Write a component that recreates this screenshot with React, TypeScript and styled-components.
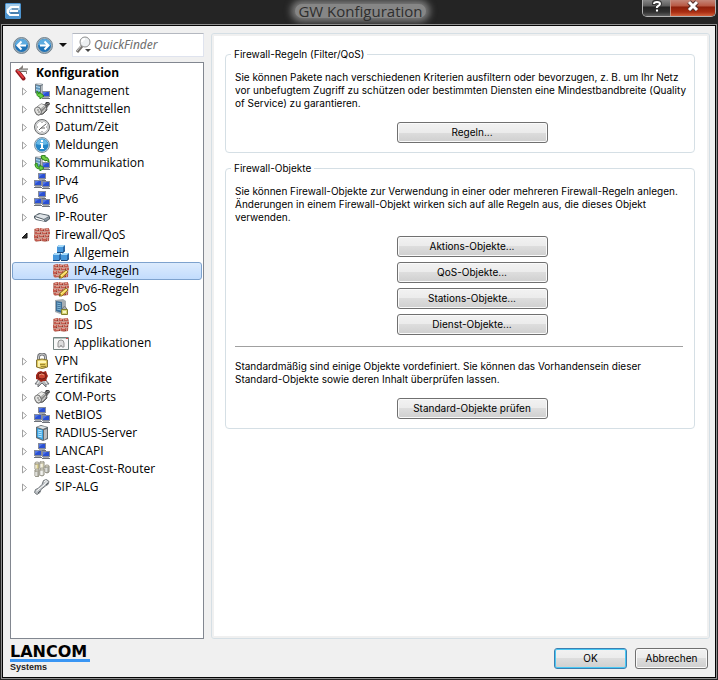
import React from "react";
import styled, { createGlobalStyle, css } from "styled-components";

const GlobalStyle = createGlobalStyle`
  * { box-sizing: border-box; }
  body { margin: 0; background: #242424; font: 10px/13px Inter, "Liberation Sans", Arial, sans-serif; color: #000; }
  button, input { font: inherit; color: inherit; }
`;

const Window = styled.div`
  min-height: 100vh;
  display: flex;
  flex-direction: column;
  background: #242424;
  padding: 0 1px 1px;
`;

const TitleBar = styled.header`
  height: 24px;
  display: grid;
  grid-template-columns: 1fr auto 1fr;
  align-items: start;
  padding: 0 1px 0 4px;
`;

const AppIcon = styled.div`
  padding-top: 3px;
  svg { display: block; }
`;

const Title = styled.h1`
  margin: 4px 0 0;
  padding: 0 3px;
  font: 15px/14px "Open Sans", "Noto Sans", sans-serif;
  color: #2e2e2e;
  background: #868686;
  border-radius: 7px;
  box-shadow: 0 0 7px 4px #7c7c7c;
`;

const CaptionButtons = styled.div`
  justify-self: end;
  display: flex;
  height: 17px;
  border: 1px solid #b4b4b4;
  border-top: 0;
  border-radius: 0 0 5px 5px;
  overflow: hidden;
`;

const CaptionButton = styled.button<{ $close?: boolean }>`
  border: 0;
  padding: 0;
  width: ${p => (p.$close ? 45 : 27)}px;
  display: flex;
  justify-content: center;
  align-items: flex-start;
  background: ${p => p.$close
    ? "linear-gradient(#c48678 0, #b85843 6px, #8d1f0a 7px, #a92d12 12px, #d4623c 16px)"
    : "linear-gradient(#868686 0, #5c5c5c 6px, #242424 7px, #303030 12px, #606060 16px)"};
  box-shadow: ${p => (p.$close ? "inset 1px 0 #c79080" : "none")};
`;

const Client = styled.main`
  flex: 1;
  display: grid;
  grid-template-columns: 194px minmax(0, 1fr);
  grid-template-rows: minmax(0, 1fr) auto;
  column-gap: 7px;
  padding: 7px 5px 3px 7px;
  background: #f0f0f0;
  border: 1px solid #050505;
  outline: 1px solid #8f8f8f;
  margin: 1px;
`;

const SidePanel = styled.aside`
  display: flex;
  flex-direction: column;
  gap: 5px;
`;

const Finder = styled.div`
  display: flex;
  align-items: center;
  height: 24px;
`;

const NavButton = styled.button<{ $narrow?: boolean }>`
  width: ${p => (p.$narrow ? 14 : 23)}px;
  height: 24px;
  padding: 0;
  border: 0;
  background: none;
  display: grid;
  place-items: center;
`;

const SearchField = styled.label`
  flex: 1;
  min-width: 0;
  height: 24px;
  margin-left: 2px;
  display: flex;
  align-items: center;
  background: #fff;
  border: 1px solid #dfe3ee;
  border-top-color: #b4b8c0;
  padding-left: 3px;
  svg { flex: none; }
  input {
    flex: 1;
    min-width: 0;
    border: 0;
    outline: 0;
    padding: 0 0 0 1px;
    background: none;
    font: italic 12px/18px "Noto Sans", "Open Sans", sans-serif;
  }
  input::placeholder { color: #6d6d6d; opacity: 1; }
`;

const Tree = styled.ul`
  flex: 1;
  margin: 0;
  padding: 1px;
  list-style: none;
  background: #fff;
  border: 1px solid #828790;
  font: 12px/18px "Open Sans", "Noto Sans", sans-serif;
`;

const SubTree = styled.ul`
  margin: 0;
  padding: 0;
  list-style: none;
`;

const TreeRow = styled.div<{ $level: number; $selected?: boolean }>`
  height: 18px;
  display: flex;
  align-items: center;
  gap: 5px;
  padding-left: ${p => [2, 7, 40][p.$level]}px;
  border: 1px solid transparent;
  border-radius: 3px;
  white-space: nowrap;
  font-weight: ${p => (p.$level === 0 ? 700 : 400)};
  ${p => p.$selected && css`
    border-color: #7da2ce;
    background: linear-gradient(#dcebfd, #c2dcfd);
  `}
  svg { flex: none; display: block; }
`;

const Expander = styled.button`
  width: 9px;
  height: 16px;
  padding: 0;
  border: 0;
  background: none;
  display: grid;
  place-items: center;
`;

const Page = styled.section`
  background: #fff;
  border: 1px solid #d5dfe5;
  border-radius: 3px;
  box-shadow: inset 0 0 0 2px #f0f0f0;
  padding: 14px 14px 0 13px;
`;

const Group = styled.fieldset`
  min-width: 0;
  margin: 0 0 9px;
  padding: 10px 3px 9px 9px;
  border: 1px solid #d5dfe5;
  border-radius: 4px;
  legend { margin-left: -4px; padding: 0 3px; }
`;

const Text = styled.p`
  margin: 0;
  white-space: pre-line;
`;

const ButtonStack = styled.div`
  display: flex;
  flex-direction: column;
  align-items: center;
  gap: 5px;
  padding: 12px 0 0 18px;
`;

const Divider = styled.hr`
  margin: 11px 8px 13px 0;
  border: 0;
  border-top: 1px solid #a0a0a0;
`;

const PushButton = styled.button<{ $wide?: boolean; $primary?: boolean }>`
  width: ${p => (p.$wide ? 151 : 73)}px;
  height: 21px;
  padding: 0;
  border: 1px solid ${p => (p.$primary ? "#3c7fb1" : "#707070")};
  border-radius: 3px;
  background: linear-gradient(#f2f2f2 0, #ebebeb 50%, #dddddd 50%, #cfcfcf 100%);
  box-shadow: inset 0 0 0 1px ${p => (p.$primary ? "#48c8f4" : "#fafafa")};
`;

const Footer = styled.footer`
  grid-column: 1 / -1;
  display: flex;
  justify-content: space-between;
  align-items: flex-start;
  padding: 7px 0 2px;
`;

const Brand = styled.div`
  font: 700 9px/10px "Liberation Sans", Arial, sans-serif;
  color: #222;
`;

const BrandName = styled.div`
  width: 80px;
  height: 16px;
  border-bottom: 3px solid #3a96f4;
  font: 700 16px/12px "DejaVu Sans", sans-serif;
  color: #000;
`;

const Actions = styled.div`
  display: flex;
  gap: 8px;
  padding: 2px 2px 0 0;
`;

type IconName = "knife" | "manage" | "plug" | "clock" | "info" | "comm" | "net" | "router" | "wall" | "cubes" | "wallEdit" | "dos" | "app" | "lock" | "seal" | "server" | "lcr" | "phone";

const Monitor = ({ x, y }: { x: number; y: number }) => (
  <g transform={`translate(${x} ${y})`}>
    <rect width="8" height="6" fill="#858b9a" />
    <rect x="1" y="1" width="6" height="4" fill="#2a50d4" />
    <path d="M1 1h4L1 4z" fill="#5277e4" />
    <path d="M1 6h6v1H1z" fill="#a8acb2" /><path d="M0 7h8v1H0z" fill="#6d7179" />
  </g>
);

const Tower = ({ x, y }: { x: number; y: number }) => (
  <g transform={`translate(${x} ${y})`}>
    <path d="M0 1l3-1 5 1v9l-3 2-5-2z" fill="#6d7882" />
    <path d="M1 2l4 1v8l-4-1z" fill="#5f97bf" />
    <path d="M1 3l4 1v1L1 4zM1 6l4 1v1L1 7z" fill="#b8daef" />
    <path d="M6 3l2-1v8l-2 1z" fill="#b4babf" />
    <path d="M0 1l3-1 5 1-3 1z" fill="#dfe3e6" />
  </g>
);

const Wall = () => (
  <g>
    <path d="M0 2l4-1 4 1 4-1 3 1 1 1-1 11-4 1-4-1-5 1-2-2z" fill="#c7958a" />
    <path d="M1 2l4-1v3H1zM6 1l4 1v2H6zM11 2l4-1v3h-4zM1 5h6v2H1zM8 5h5v2H8zM14 5h2v2h-2zM0 8h4v3H0zM5 8h5v2H5zM11 8h4v2h-4zM1 12h6v2H1zM8 11h5v3H8zM14 11h1v3h-1z" fill="#c25c50" />
    <path d="M2 2h2v1H2zM7 2h2v1H7zM12 2h2v1h-2zM3 5h3v1H3zM9 5h3v1H9zM1 8h2v1H1zM6 8h3v1H6zM12 8h2v1h-2zM3 12h3v1H3zM9 11h3v1H9z" fill="#e39787" />
    <path d="M4 3h1v1H4zM9 3h1v1H9zM6 6h1v1H6zM12 6h1v1h-1zM3 10h1v1H3zM9 9h1v1H9zM14 9h1v1h-1zM6 13h1v1H6zM12 13h1v1h-1z" fill="#8f372f" />
  </g>
);

const Padlock = () => (
  <g>
    <path d="M4.500 8V4q0-3 3.500-3t3.500 3v4" fill="none" stroke="#77797d" strokeWidth="3" />
    <path d="M4.500 7V4q0-3 3.500-3t3.500 3v3" fill="none" stroke="#c9cacb" />
    <path d="M2.500 7q5.500-2 11 0v7q-5.500 3-11 0z" fill="#e0c95c" stroke="#857538" />
    <path d="M4 8q4-1 8 0v2H4z" fill="#fff6b5" />
    <path d="M6 11h5v1H6zM7 13h5v1H7z" fill="#a08a30" />
    <path d="M4 10h2v4H4z" fill="#fbf0a8" />
  </g>
);

const drawings: Record<IconName, React.ReactNode> = {
  knife: <g>
    <path d="M2.500 6L8.500 13.500" stroke="#8f171c" strokeWidth="4" strokeLinecap="round" />
    <path d="M2.500 5.500L8 12.500" stroke="#e74144" strokeWidth="2" strokeLinecap="round" />
    <path d="M2 6l6-6v3L5 6z" fill="#85807c" />
    <path d="M4 4h9v1l-2 1H5z" fill="#c7c7c4" />
    <path d="M4 4h9M5 6.500h6" stroke="#716c68" /><path d="M11 6v3h1V6" fill="#8d8884" />
  </g>,
  manage: <g><Tower x={1} y={0} /><Monitor x={8} y={8} /><path d="M3 8l2 3 0-2 5 4-4 3v-2Q2 14 3 8z" fill="#6ad043" stroke="#2b8a1b" /></g>,
  comm: <g><Tower x={1} y={1} /><Monitor x={8} y={7} /><path d="M7 1l4-1v2q4 0 4 5l-3-2v1L8 4z" fill="#75cf45" stroke="#267c17" /><path d="M3 8q0 5 3 4v-2l4 3-4 3v-2q-5 0-5-5z" fill="#6ad043" stroke="#2b8a1b" /></g>,
  plug: <g>
    <path d="M10 5l2-4h3l1 2-3 4z" fill="#3c3c3c" /><path d="M11 4l4-2M12 6l3-2" stroke="#999" />
    <path d="M2 7l5-4 5 1 1 5-4 4-5 1z" fill="#8b8b89" stroke="#5c5c5c" />
    <path d="M2 7l5-4 4 1-5 4z" fill="#ededea" /><path d="M5 10l6-5M8 12l4-5M6 13l5-4" stroke="#cfcfcd" />
    <ellipse cx="4" cy="10" rx="3" ry="4" transform="rotate(-25 4 10)" fill="#e2e2df" stroke="#707070" />
    <path d="M3 9h2M4 11h2" stroke="#777" />
  </g>,
  clock: <g>
    <circle cx="8" cy="8" r="7.500" fill="#dedede" stroke="#676a6b" /><circle cx="8" cy="8" r="6" fill="#fff" stroke="#b9bbbc" />
    <path d="M12 5L7 9l-2 2M7 9h4" fill="none" stroke="#666" /><path d="M8 3v1M3 8h1M12 8h1M8 12v1" stroke="#777" />
  </g>,
  info: <g>
    <circle cx="8" cy="8" r="7.500" fill="#c9dce8" stroke="#7b93a4" /><circle cx="8" cy="8" r="6.500" fill="#2586c6" />
    <path d="M2 7q2-5 6-5t6 5q-6 2-12 0z" fill="#68b9e6" /><path d="M7 3h2v2H7zM6 6h3v5h1v1H6v-1h1V7H6z" fill="#fff" />
  </g>,
  net: <g><Monitor x={4} y={0} /><Monitor x={0} y={7} /><Monitor x={8} y={8} /></g>,
  router: <g>
    <path d="M0 7l5-3 10 2 1 2v2l-4 3-10-2-2-2z" fill="#525e67" />
    <path d="M1 7l5-2 9 2-5 3z" fill="#dfe4e8" /><path d="M1 8l9 3v1L2 10z" fill="#fff" /><path d="M10 10l5-2v2l-4 2z" fill="#8a98a2" />
  </g>,
  wall: <Wall />,
  wallEdit: <g><Wall /><path d="M6 15l1-3 6-5 2 2-6 6z" fill="#efca40" stroke="#90712a" /><path d="M8 13l6-5" stroke="#fff0a4" /><path d="M6 15l1-2 1 1z" fill="#333" /></g>,
  cubes: <g>
    {[[4, 0], [0, 8], [8, 8]].map(([x, y]) => <g key={x} transform={`translate(${x} ${y})`}>
      <path d="M0 2l2-2h6v6L6 8H0z" fill="#2a68a8" /><path d="M0 2l2-2h6L6 2z" fill="#a5dafa" /><path d="M0 2h6v6H0z" fill="#4697db" /><path d="M0 7h6l2-2v1L6 8H0z" fill="#1b4778" />
    </g>)}
  </g>,
  dos: <g><path d="M2 1l8-1 3 2v11l-6 2-5-2z" fill="#a6adb2" /><path d="M3 2l6 1v11l-6-2z" fill="#3c6d96" /><path d="M4 4l4 1M4 6l4 1M4 8l4 1M4 10l4 1" stroke="#86bcdc" /><path d="M9.500 10V9q2-3 4 0v2" fill="none" stroke="#777" /><path d="M8.500 10.500h6v5h-6z" fill="#dad878" stroke="#83802c" /><path d="M10 12h3v2h-3z" fill="#f8f7c6" /></g>,
  app: <g><path d="M.5 2.500h15v12H.5z" fill="#f8f8f8" stroke="#748381" /><path d="M1 3h14v1H1z" fill="#bac7c2" /><path d="M13 3h2v1h-2z" fill="#d44" /><path d="M5 12V8q0-3 3-3t3 3v4H9l-1-2-1 2z" fill="#dedede" stroke="#949494" /></g>,
  lock: <Padlock />,
  seal: <g>
    <path d="M5 8l-4 5h3v3l4-4 4 4v-3h3l-4-5z" fill="#b4b6b8" stroke="#707377" />
    <path d="M5 10l-2 3M11 10l2 3" stroke="#f4f4f4" />
    <path d="M4 1l3-1 2 1 3-1 1 3 1 2-1 2-1 3-3 0-2 1-2-2-3-1V4z" fill="#9f2619" />
    <ellipse cx="8" cy="5" rx="4" ry="3" fill="#cb4430" stroke="#701b15" /><path d="M5 4q3-2 5 0" fill="none" stroke="#ed9a79" />
  </g>,
  server: <g><path d="M2 2l5-2 7 2v12l-5 2-7-3z" fill="#626a70" /><path d="M3 3l6 2v10l-6-3z" fill="#3aa2e2" /><path d="M4 5l4 1M4 7l4 1M4 9l4 1M4 11l4 1" stroke="#c4ecff" /><path d="M10 5l3-1v9l-3 2z" fill="#b9babc" /><path d="M3 2l4-1 6 1-4 2z" fill="#e1e6e8" /></g>,
  lcr: <g>
    {[[1, 1, "#dccf8d"], [6, 0, "#ece7c8"], [11, 4, "#b6b8b2"], [1, 8, "#bbbab0"], [6, 7, "#e6e7e2"]].map(([x, y, c]) => <g key={`${x}-${y}`} transform={`translate(${x} ${y})`}>
      <path d="M0 1h4v6q-2 2-4 0z" fill={c as string} stroke="#8a887a" /><ellipse cx="2" cy="1" rx="2" ry="1" fill="#f7f5e8" stroke="#9c998b" /><path d="M1 3v4" stroke="#fff" />
    </g>)}
  </g>,
  phone: <g>
    <path d="M9.500 1.500l3-1 2.500 2-1 3-2 1-5 4-1 3-3 2-2.500-2 1-3 2.500-1 4-4z" fill="#b9bec2" stroke="#73787c" />
    <path d="M10 3l2-1.500 1 1L10 6l-5 4-2.500 2" fill="none" stroke="#fff" /><path d="M12 6l2-2M4 14l2-2" stroke="#5a6065" />
  </g>,
};

const Icon = ({ name }: { name: IconName }) => <svg width="16" height="16" viewBox="0 0 16 16" aria-hidden="true">{drawings[name]}</svg>;

interface Node { label: string; icon: IconName; children?: Node[] }

const nodes: Node[] = [
  { label: "Management", icon: "manage" },
  { label: "Schnittstellen", icon: "plug" },
  { label: "Datum/Zeit", icon: "clock" },
  { label: "Meldungen", icon: "info" },
  { label: "Kommunikation", icon: "comm" },
  { label: "IPv4", icon: "net" },
  { label: "IPv6", icon: "net" },
  { label: "IP-Router", icon: "router" },
  {
    label: "Firewall/QoS", icon: "wall", children: [
      { label: "Allgemein", icon: "cubes" },
      { label: "IPv4-Regeln", icon: "wallEdit" },
      { label: "IPv6-Regeln", icon: "wallEdit" },
      { label: "DoS", icon: "dos" },
      { label: "IDS", icon: "wall" },
      { label: "Applikationen", icon: "app" },
    ],
  },
  { label: "VPN", icon: "lock" },
  { label: "Zertifikate", icon: "seal" },
  { label: "COM-Ports", icon: "plug" },
  { label: "NetBIOS", icon: "net" },
  { label: "RADIUS-Server", icon: "server" },
  { label: "LANCAPI", icon: "net" },
  { label: "Least-Cost-Router", icon: "lcr" },
  { label: "SIP-ALG", icon: "phone" },
];

const Arrow = ({ back }: { back?: boolean }) => (
  <svg width="17" height="17" viewBox="0 0 17 17" aria-hidden="true">
    <circle cx="8.500" cy="8.500" r="8" fill="#9cadb9" stroke="#738490" />
    <circle cx="8.500" cy="8.500" r="6.500" fill="#1e73b8" />
    <path d="M2 8q1-6 6.500-6T15 8q-6 2-13 0z" fill="#5cabe0" />
    <path d={back ? "M13 8.500H5M8.500 4.500l-4 4 4 4" : "M4 8.500h8M8.500 4.500l4 4-4 4"} fill="none" stroke="#fff" strokeWidth="2" />
  </svg>
);

export default function App() {
  const [selected, setSelected] = React.useState("IPv4-Regeln");
  return (
    <>
      <GlobalStyle />
      <Window>
        <TitleBar>
          <AppIcon>
            <svg width="16" height="16" viewBox="0 0 16 16" aria-hidden="true">
              <path d="M1 0h14l1 1v14l-1 1H1l-1-1V1z" fill="#4d94cf" /><path d="M1 1h14v6L1 10z" fill="#a3cceb" />
              <path d="M14 4H6L3 7v3l2 2h9M13 8H5" fill="none" stroke="#fff" strokeWidth="2" />
              <path d="M13 6H7M6 10h8" stroke="#476c8e" />
            </svg>
          </AppIcon>
          <Title>GW Konfiguration</Title>
          <CaptionButtons>
            <CaptionButton aria-label="Hilfe">
              <svg width="12" height="13" viewBox="0 0 12 13"><path d="M3 5V3q0-1 1-1h3q2 0 2 2 0 1-2 2L6 7v1M6 9.500v2" fill="none" stroke="#333" strokeWidth="4" /><path d="M3 4q0-2 3-2t3 2q0 1-2 2L6 7v1M6 9.500v2" fill="none" stroke="#fff" strokeWidth="2" /></svg>
            </CaptionButton>
            <CaptionButton $close aria-label="Schließen">
              <svg width="14" height="13" viewBox="0 0 14 13"><path d="M3 2l8 8M11 2l-8 8" stroke="#54322e" strokeWidth="5" /><path d="M3 2l8 8M11 2l-8 8" stroke="#fff" strokeWidth="3" /></svg>
            </CaptionButton>
          </CaptionButtons>
        </TitleBar>
        <Client>
          <SidePanel>
            <Finder>
              <NavButton aria-label="Zurück"><Arrow back /></NavButton>
              <NavButton aria-label="Vorwärts"><Arrow /></NavButton>
              <NavButton $narrow aria-label="Verlauf"><svg width="8" height="4" viewBox="0 0 8 4"><path d="M0 0h8L4 4z" fill="#111" /></svg></NavButton>
              <SearchField>
                <svg width="17" height="18" viewBox="0 0 17 18" aria-hidden="true">
                  <path d="M6 10l-5 6" stroke="#77736f" strokeWidth="3" /><path d="M5 10l-4 5" stroke="#ccc" />
                  <circle cx="9" cy="6" r="5" fill="#edf0f2" stroke="#8d8e8f" strokeWidth="1" /><path d="M6 6q0-3 3-3" fill="none" stroke="#fff" strokeWidth="2" />
                  <path d="M9 13h6l-3 3z" fill="#444" />
                </svg>
                <input aria-label="QuickFinder" placeholder="QuickFinder" />
              </SearchField>
            </Finder>
            <Tree role="tree">
              <li role="treeitem"><TreeRow $level={0}><Icon name="knife" />Konfiguration</TreeRow></li>
              {nodes.map(n => (
                <li key={n.label} role="treeitem" aria-expanded={!!n.children}>
                  <TreeRow $level={1} $selected={selected === n.label} onClick={() => setSelected(n.label)}>
                    <Expander aria-label={n.label}>
                      <svg width="7" height="9" viewBox="0 0 7 9">
                        {n.children ? <path d="M6 2v5H1z" fill="#333" stroke="#111" /> : <path d="M1.500 1v7l4-3.500z" fill="#fff" stroke="#a0a0a0" />}
                      </svg>
                    </Expander>
                    <Icon name={n.icon} />{n.label}
                  </TreeRow>
                  {n.children && (
                    <SubTree role="group">
                      {n.children.map(c => (
                        <li key={c.label} role="treeitem" aria-selected={selected === c.label}>
                          <TreeRow $level={2} $selected={selected === c.label} onClick={() => setSelected(c.label)}><Icon name={c.icon} />{c.label}</TreeRow>
                        </li>
                      ))}
                    </SubTree>
                  )}
                </li>
              ))}
            </Tree>
          </SidePanel>
          <Page>
            <Group>
              <legend>Firewall-Regeln (Filter/QoS)</legend>
              <Text>{"Sie können Pakete nach verschiedenen Kriterien ausfiltern oder bevorzugen, z. B. um Ihr Netz\nvor unbefugtem Zugriff zu schützen oder bestimmten Diensten eine Mindestbandbreite (Quality\nof Service) zu garantieren."}</Text>
              <ButtonStack><PushButton $wide>Regeln...</PushButton></ButtonStack>
            </Group>
            <Group>
              <legend>Firewall-Objekte</legend>
              <Text>{"Sie können Firewall-Objekte zur Verwendung in einer oder mehreren Firewall-Regeln anlegen.\nÄnderungen in einem Firewall-Objekt wirken sich auf alle Regeln aus, die dieses Objekt\nverwenden."}</Text>
              <ButtonStack>
                {["Aktions-Objekte...", "QoS-Objekte...", "Stations-Objekte...", "Dienst-Objekte..."].map(t => <PushButton $wide key={t}>{t}</PushButton>)}
              </ButtonStack>
              <Divider />
              <Text>{"Standardmäßig sind einige Objekte vordefiniert. Sie können das Vorhandensein dieser\nStandard-Objekte sowie deren Inhalt überprüfen lassen."}</Text>
              <ButtonStack><PushButton $wide>Standard-Objekte prüfen</PushButton></ButtonStack>
            </Group>
          </Page>
          <Footer>
            <Brand><BrandName>LANCOM</BrandName>Systems</Brand>
            <Actions>
              <PushButton $primary>OK</PushButton>
              <PushButton>Abbrechen</PushButton>
            </Actions>
          </Footer>
        </Client>
      </Window>
    </>
  );
}
